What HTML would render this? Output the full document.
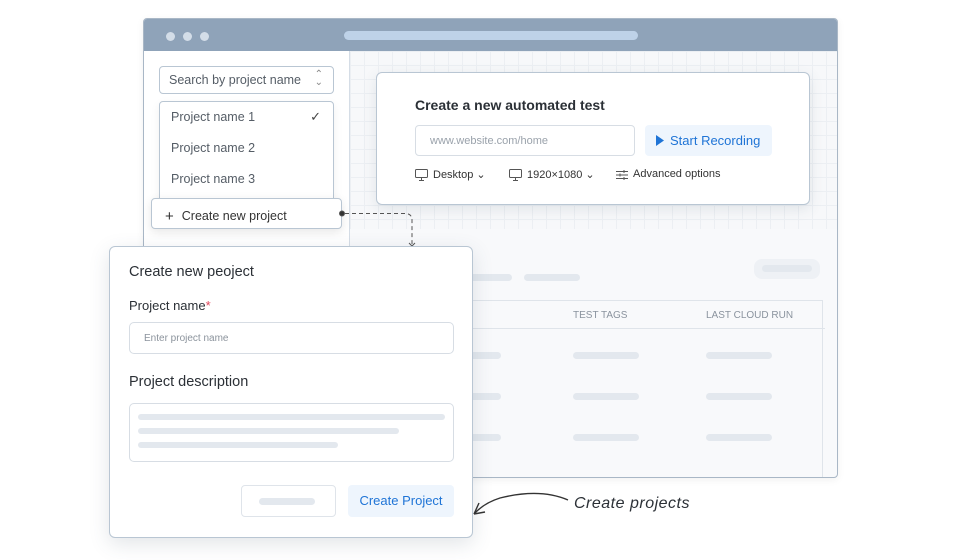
<!DOCTYPE html>
<html><head><style>
*{box-sizing:border-box;margin:0;padding:0}
body{width:980px;height:560px;background:#fff;font-family:"Liberation Sans",sans-serif;position:relative;overflow:hidden;color:#2a2f36}
.a{position:absolute}
.bar{position:absolute;background:#e3e8ee;border-radius:5px;height:7px}
</style></head><body>
<div class="a" style="left:143px;top:18px;width:695px;height:460px;border:1px solid #a9b7c6;border-radius:4px;background:#f8f9fb;overflow:hidden;box-shadow:0 2px 8px rgba(0,0,0,.06)">
  <div class="a" style="left:0;top:0;width:695px;height:32px;background:#8fa3b9"></div>
  <div class="a" style="left:22px;top:13px;width:9px;height:9px;border-radius:50%;background:#d3dde8"></div>
  <div class="a" style="left:39px;top:13px;width:9px;height:9px;border-radius:50%;background:#d3dde8"></div>
  <div class="a" style="left:56px;top:13px;width:9px;height:9px;border-radius:50%;background:#d3dde8"></div>
  <div class="a" style="left:200px;top:12px;width:294px;height:9px;border-radius:5px;background:#bed2e8"></div>
  <div class="a" style="left:206px;top:32px;width:489px;height:178px;background-color:#f7f8fa;background-image:linear-gradient(#eceff3 1px,transparent 1px),linear-gradient(90deg,#eceff3 1px,transparent 1px);background-size:14px 14px"></div>
  <div class="a" style="left:0;top:32px;width:206px;height:428px;background:#fff;border-right:1px solid #d5dde6"></div>
  <div class="bar" style="left:310px;top:255px;width:58px"></div>
  <div class="bar" style="left:380px;top:255px;width:56px"></div>
  <div class="bar" style="left:610px;top:240px;width:66px;height:20px;background:#eef1f5;border-radius:8px"></div>
  <div class="bar" style="left:618px;top:246px;width:50px"></div>
  <div class="a" style="left:320px;top:281px;width:359px;height:190px;border:1px solid #dfe4ea;background:#f8f9fb">
    <div class="a" style="left:0;top:27px;width:360px;height:1px;background:#dfe4ea"></div>
    <div class="a" style="left:108px;top:9px;font-size:10px;color:#8a939e">TEST TAGS</div>
    <div class="a" style="left:241px;top:9px;font-size:10px;color:#8a939e">LAST CLOUD RUN</div>
    <div class="bar" style="left:-20px;top:51px;width:56px"></div>
    <div class="bar" style="left:-20px;top:92px;width:56px"></div>
    <div class="bar" style="left:-20px;top:133px;width:56px"></div>
    <div class="bar" style="left:108px;top:51px;width:66px"></div><div class="bar" style="left:241px;top:51px;width:66px"></div>
    <div class="bar" style="left:108px;top:92px;width:66px"></div><div class="bar" style="left:241px;top:92px;width:66px"></div>
    <div class="bar" style="left:108px;top:133px;width:66px"></div><div class="bar" style="left:241px;top:133px;width:66px"></div>
  </div>
</div>
<!-- card -->
<div class="a" style="left:376px;top:72px;width:434px;height:133px;background:#fff;border:1px solid #b9c6d3;border-radius:6px;box-shadow:0 4px 14px rgba(60,80,100,.12)">
  <div class="a" style="left:38px;top:24px;font-size:14px;font-weight:bold;color:#2b3036">Create a new automated test</div>
  <div class="a" style="left:38px;top:52px;width:220px;height:31px;border:1px solid #d7dde4;border-radius:4px;font-size:11px;color:#9aa2ab;padding:9px 14px">www.website.com/home</div>
  <div class="a" style="left:268px;top:52px;width:127px;height:31px;background:#eef5fd;border-radius:4px;font-size:13px;color:#1f74d6;padding:8px 0 0 25px">Start Recording</div>
  <svg class="a" style="left:278px;top:62px" width="10" height="11"><path d="M1 0L9 5.5L1 11Z" fill="#1f74d6"/></svg>
  <svg class="a" style="left:38px;top:96px" width="13" height="12" fill="none" stroke="#555" stroke-width="1"><rect x="0.5" y="0.5" width="12" height="8" rx="1"/><path d="M4 11.5h5M6.5 9v2.5"/></svg>
  <div class="a" style="left:56px;top:95px;font-size:11px;color:#333">Desktop ⌄</div>
  <svg class="a" style="left:132px;top:96px" width="13" height="12" fill="none" stroke="#555" stroke-width="1"><rect x="0.5" y="0.5" width="12" height="8" rx="1"/><path d="M4 11.5h5M6.5 9v2.5"/></svg>
  <div class="a" style="left:150px;top:95px;font-size:11px;color:#333">1920×1080 ⌄</div>
  <svg class="a" style="left:239px;top:96px" width="12" height="12" stroke="#555" stroke-width="1"><path d="M0 2.5h12M0 6h12M0 9.5h12M8 1v3M4 4.5v3M8 8v3"/></svg>
  <div class="a" style="left:256px;top:95px;font-size:11px;color:#333">Advanced options</div>
</div>
<!-- sidebar -->
<div class="a" style="left:159px;top:66px;width:175px;height:28px;border:1px solid #b9c6d3;border-radius:4px;font-size:12.5px;color:#555d66;padding:6px 9px">Search by project name<span style="position:absolute;right:10px;top:4px;font-size:10px;color:#888;line-height:8px">⌃<br>⌄</span></div>
<div class="a" style="left:159px;top:101px;width:175px;height:110px;border:1px solid #b9c6d3;border-radius:4px;background:#fff;box-shadow:0 3px 10px rgba(0,0,0,.06);font-size:12.5px;color:#555d66">
  <div class="a" style="left:11px;top:8px">Project name 1</div>
  <div class="a" style="right:12px;top:7px;font-size:13px;color:#444">✓</div>
  <div class="a" style="left:11px;top:39px">Project name 2</div>
  <div class="a" style="left:11px;top:70px">Project name 3</div>
</div>
<div class="a" style="left:151px;top:198px;width:191px;height:31px;border:1px solid #b9c6d3;border-radius:4px;background:#fff;box-shadow:0 3px 10px rgba(0,0,0,.1);font-size:12.5px;color:#333;padding:8px 0 0 13px"><span style="font-size:15px;margin-right:8px;position:relative;top:1px">+</span>Create new project</div>
<svg class="a" style="left:338px;top:208px" width="80" height="42" fill="none" stroke="#555" stroke-width="1"><circle cx="4" cy="5.5" r="2.5" fill="#333"/><path d="M7 5.5H67Q74 5.5 74 12V36" stroke-dasharray="4 3"/><path d="M71 35l3 3 3-3"/></svg>
<!-- modal -->
<div class="a" style="left:109px;top:246px;width:364px;height:292px;background:#fff;border:1px solid #b9c6d3;border-radius:6px;box-shadow:0 6px 20px rgba(60,80,100,.15)">
  <div class="a" style="left:19px;top:17px;font-size:14.5px;color:#2b3036">Create new peoject</div>
  <div class="a" style="left:19px;top:51px;font-size:13px;color:#2b3036">Project name<span style="color:#e0455a">*</span></div>
  <div class="a" style="left:19px;top:75px;width:325px;height:32px;border:1px solid #d7dde4;border-radius:5px;font-size:10px;color:#8b939c;padding:10px 14px">Enter project name</div>
  <div class="a" style="left:19px;top:127px;font-size:14.5px;color:#2b3036">Project description</div>
  <div class="a" style="left:19px;top:156px;width:325px;height:59px;border:1px solid #d7dde4;border-radius:5px">
    <div class="bar" style="left:8px;top:10px;width:307px;height:6px"></div>
    <div class="bar" style="left:8px;top:24px;width:261px;height:6px"></div>
    <div class="bar" style="left:8px;top:38px;width:200px;height:6px"></div>
  </div>
  <div class="a" style="left:131px;top:238px;width:95px;height:32px;border:1px solid #dfe4ea;border-radius:4px"><div class="bar" style="left:17px;top:12px;width:56px"></div></div>
  <div class="a" style="left:238px;top:238px;width:106px;height:32px;background:#eef5fd;border-radius:4px;font-size:13px;color:#1f74d6;text-align:center;padding-top:8px">Create Project</div>
</div>
<svg class="a" style="left:470px;top:490px" width="105" height="32" fill="none" stroke="#333" stroke-width="1.4"><path d="M98 10Q70 -2 30 8Q14 13 4 24"/><path d="M4 24L9 13M4 24L15 22"/></svg>
<div class="a" style="left:574px;top:495px;font-size:16px;font-style:italic;font-family:'Liberation Sans',sans-serif;color:#2b3036;letter-spacing:0.5px">Create projects</div>
</body></html>
